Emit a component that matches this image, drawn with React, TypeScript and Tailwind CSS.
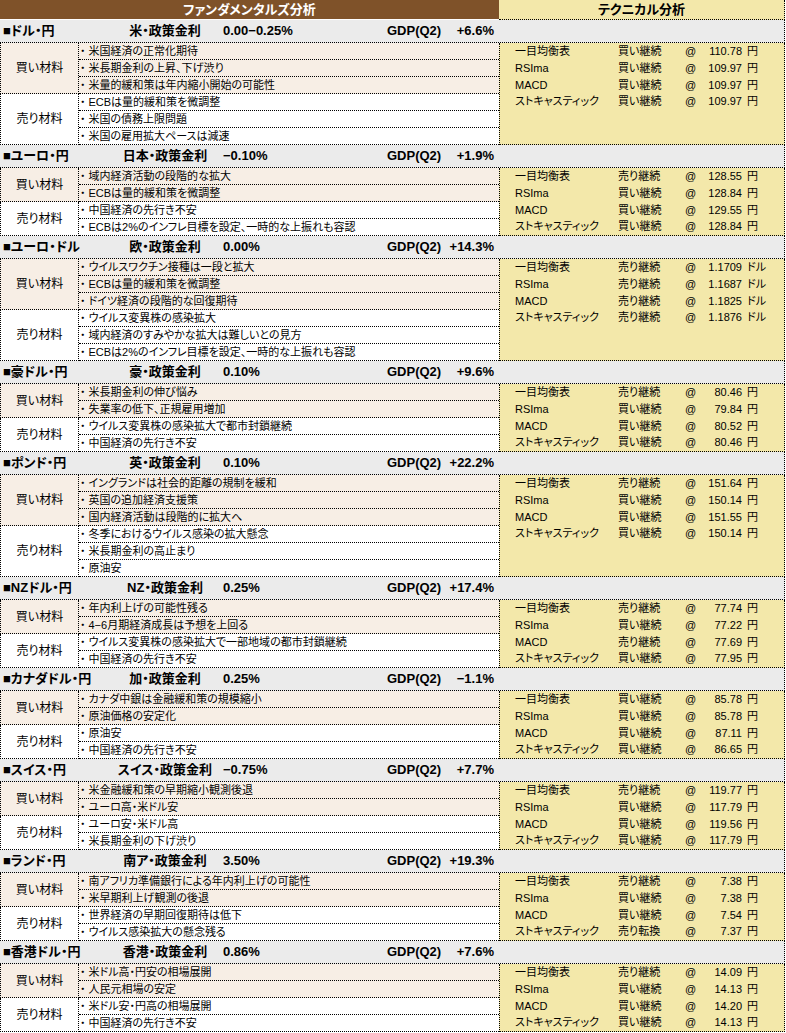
import React from "react"

type Section = {
  pair: string
  policy: string
  rate: string
  gdp: string
  unit: string
  buy: string[]
  sell: string[]
  tech: [string, string][]
}

const techLabels = ["一目均衡表", "RSIma", "MACD", "ストキャスティック"]

const sections: Section[] = [
  {
    pair: "■ドル・円", policy: "米・政策金利", rate: "0.00−0.25%", gdp: "+6.6%", unit: "円",
    buy: ["米国経済の正常化期待", "米長期金利の上昇、下げ渋り", "米量的緩和策は年内縮小開始の可能性"],
    sell: ["ECBは量的緩和策を微調整", "米国の債務上限問題", "米国の雇用拡大ペースは減速"],
    tech: [["買い継続", "110.78"], ["買い継続", "109.97"], ["買い継続", "109.97"], ["買い継続", "109.97"]],
  },
  {
    pair: "■ユーロ・円", policy: "日本・政策金利", rate: "−0.10%", gdp: "+1.9%", unit: "円",
    buy: ["域内経済活動の段階的な拡大", "ECBは量的緩和策を微調整"],
    sell: ["中国経済の先行き不安", "ECBは2%のインフレ目標を設定、一時的な上振れも容認"],
    tech: [["売り継続", "128.55"], ["買い継続", "128.84"], ["買い継続", "129.55"], ["買い継続", "128.84"]],
  },
  {
    pair: "■ユーロ・ドル", policy: "欧・政策金利", rate: "0.00%", gdp: "+14.3%", unit: "ドル",
    buy: ["ウイルスワクチン接種は一段と拡大", "ECBは量的緩和策を微調整", "ドイツ経済の段階的な回復期待"],
    sell: ["ウイルス変異株の感染拡大", "域内経済のすみやかな拡大は難しいとの見方", "ECBは2%のインフレ目標を設定、一時的な上振れも容認"],
    tech: [["売り継続", "1.1709"], ["売り継続", "1.1687"], ["売り継続", "1.1825"], ["売り継続", "1.1876"]],
  },
  {
    pair: "■豪ドル・円", policy: "豪・政策金利", rate: "0.10%", gdp: "+9.6%", unit: "円",
    buy: ["米長期金利の伸び悩み", "失業率の低下、正規雇用増加"],
    sell: ["ウイルス変異株の感染拡大で都市封鎖継続", "中国経済の先行き不安"],
    tech: [["売り継続", "80.46"], ["買い継続", "79.84"], ["買い継続", "80.52"], ["買い継続", "80.46"]],
  },
  {
    pair: "■ポンド・円", policy: "英・政策金利", rate: "0.10%", gdp: "+22.2%", unit: "円",
    buy: ["イングランドは社会的距離の規制を緩和", "英国の追加経済支援策", "国内経済活動は段階的に拡大へ"],
    sell: ["冬季におけるウイルス感染の拡大懸念", "米長期金利の高止まり", "原油安"],
    tech: [["売り継続", "151.64"], ["買い継続", "150.14"], ["買い継続", "151.55"], ["買い継続", "150.14"]],
  },
  {
    pair: "■NZドル・円", policy: "NZ・政策金利", rate: "0.25%", gdp: "+17.4%", unit: "円",
    buy: ["年内利上げの可能性残る", "4−6月期経済成長は予想を上回る"],
    sell: ["ウイルス変異株の感染拡大で一部地域の都市封鎖継続", "中国経済の先行き不安"],
    tech: [["売り継続", "77.74"], ["買い継続", "77.22"], ["売り継続", "77.69"], ["買い継続", "77.95"]],
  },
  {
    pair: "■カナダドル・円", policy: "加・政策金利", rate: "0.25%", gdp: "−1.1%", unit: "円",
    buy: ["カナダ中銀は金融緩和策の規模縮小", "原油価格の安定化"],
    sell: ["原油安", "中国経済の先行き不安"],
    tech: [["買い継続", "85.78"], ["買い継続", "85.78"], ["買い継続", "87.11"], ["買い継続", "86.65"]],
  },
  {
    pair: "■スイス・円", policy: "スイス・政策金利", rate: "−0.75%", gdp: "+7.7%", unit: "円",
    buy: ["米金融緩和策の早期縮小観測後退", "ユーロ高・米ドル安"],
    sell: ["ユーロ安・米ドル高", "米長期金利の下げ渋り"],
    tech: [["売り継続", "119.77"], ["買い継続", "117.79"], ["買い継続", "119.56"], ["買い継続", "117.79"]],
  },
  {
    pair: "■ランド・円", policy: "南ア・政策金利", rate: "3.50%", gdp: "+19.3%", unit: "円",
    buy: ["南アフリカ準備銀行による年内利上げの可能性", "米早期利上げ観測の後退"],
    sell: ["世界経済の早期回復期待は低下", "ウイルス感染拡大の懸念残る"],
    tech: [["売り継続", "7.38"], ["買い継続", "7.38"], ["買い継続", "7.54"], ["売り転換", "7.37"]],
  },
  {
    pair: "■香港ドル・円", policy: "香港・政策金利", rate: "0.86%", gdp: "+7.6%", unit: "円",
    buy: ["米ドル高・円安の相場展開", "人民元相場の安定"],
    sell: ["米ドル安・円高の相場展開", "中国経済の先行き不安"],
    tech: [["売り継続", "14.09"], ["買い継続", "14.13"], ["買い継続", "14.20"], ["買い継続", "14.13"]],
  },
]

const Group = ({ label, items, bg }: { label: string; items: string[]; bg: string }) => (
  <div className={`flex ${bg}`}>
    <div className="w-[79px] shrink-0 flex items-center justify-center border-l border-r border-b border-dotted border-black text-[12px]">
      {label}
    </div>
    <div className="flex-1">
      {items.map((t, i) => (
        <div key={i} className="h-[17px] border-b border-dotted border-black pl-[1px] text-[11px] leading-[16px] whitespace-nowrap">
          <span className="mr-[3px]">・</span>
          {t}
        </div>
      ))}
    </div>
  </div>
)

const Block = ({ s }: { s: Section }) => (
  <>
    <div className="grid h-[23px] grid-cols-[110px_110px_165px_58px_51px_1fr] items-center border-b border-r border-dotted border-black bg-[#ebebeb] text-[13px] font-bold whitespace-nowrap">
      <span className="pl-[3px]">{s.pair}</span>
      <span className="text-center">{s.policy}</span>
      <span className="pl-[3px]">{s.rate}</span>
      <span className="pl-[2px]">GDP(Q2)</span>
      <span className="text-right">{s.gdp}</span>
      <span />
    </div>
    <div className="flex">
      <div className="w-[499px] shrink-0">
        <Group label="買い材料" items={s.buy} bg="bg-[#f7eee5]" />
        <Group label="売り材料" items={s.sell} bg="bg-white" />
      </div>
      <div className="flex-1 bg-[#f3e8aa] border-l border-r border-b border-dotted border-black">
        {s.tech.map(([sig, val], i) => (
          <div key={i} className="grid h-[16.75px] grid-cols-[103px_67px_22px_35px_1fr] items-center pl-[15px] text-[11px] whitespace-nowrap">
            <span>{techLabels[i]}</span>
            <span>{sig}</span>
            <span>@</span>
            <span className="text-right">{val}</span>
            <span className="pl-[5px]">{s.unit}</span>
          </div>
        ))}
      </div>
    </div>
  </>
)

export default function App() {
  return (
    <div className="w-[785px] bg-white text-black font-['Liberation_Sans','Noto_Sans_CJK_JP',sans-serif] [font-feature-settings:'palt']">
      <div className="flex h-[20px]">
        <div className="w-[499px] shrink-0 bg-[#7f5229] border-b border-white flex items-center justify-center text-white font-bold text-[13px]">
          ファンダメンタルズ分析
        </div>
        <div className="flex-1 bg-[#f3e8aa] border-r border-b border-dotted border-black flex items-center justify-center font-bold text-[13px]">
          テクニカル分析
        </div>
      </div>
      {sections.map((s, i) => (
        <Block key={i} s={s} />
      ))}
    </div>
  )
}
